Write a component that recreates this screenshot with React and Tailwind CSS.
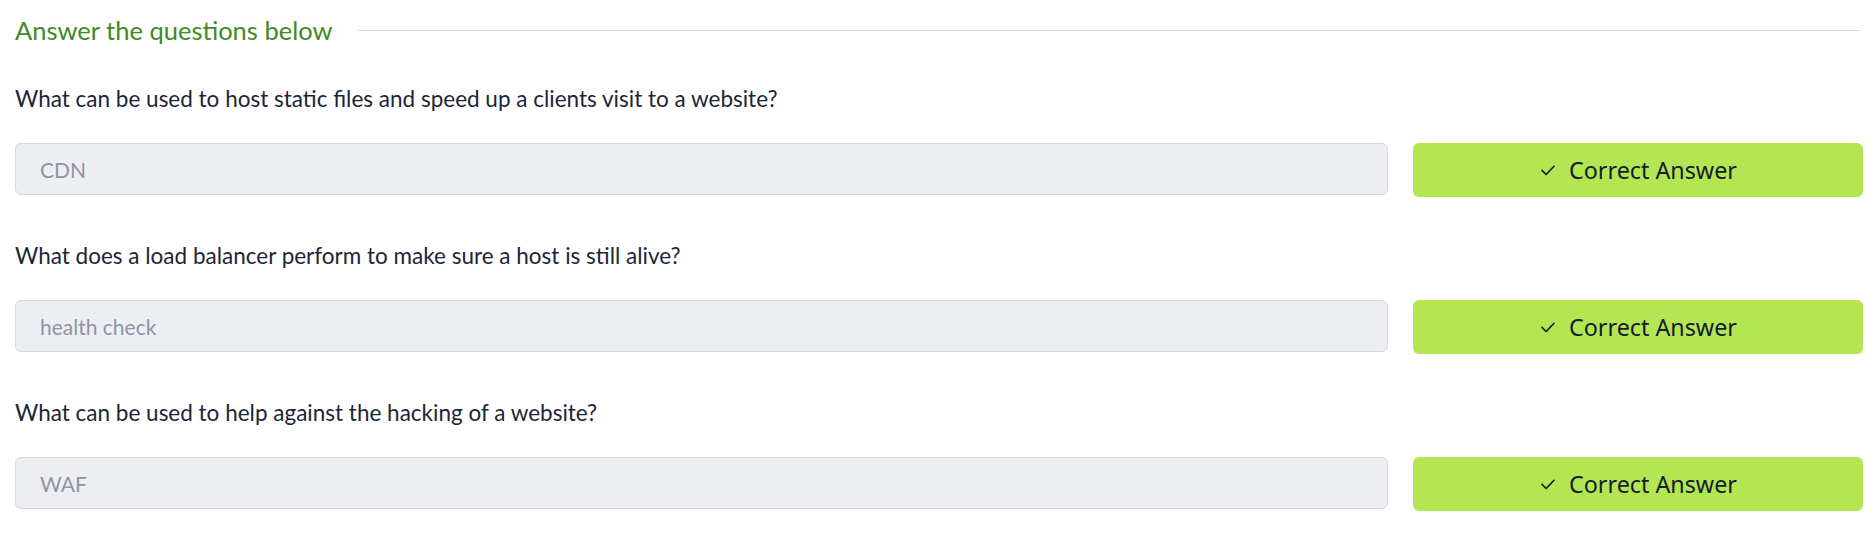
import { useState } from "react";

const questions = [
  { q: "What can be used to host static files and speed up a clients visit to a website?", a: "CDN" },
  { q: "What does a load balancer perform to make sure a host is still alive?", a: "health check" },
  { q: "What can be used to help against the hacking of a website?", a: "WAF" },
];

function CheckIcon() {
  return (
    <svg width="18" height="18" viewBox="0 0 24 24" fill="none" stroke="currentColor" strokeWidth="2.2" strokeLinecap="round" strokeLinejoin="round">
      <polyline points="4 12.5 9.5 18 20 7" />
    </svg>
  );
}

function QuestionRow({ q, a }) {
  const [value, setValue] = useState(a);
  return (
    <div className="mb-[43px]">
      <p className="h-[32px] leading-[32px] text-[22.5px] text-[#1c2538] mb-[28px]">{q}</p>
      <div className="flex items-start gap-[25px]">
        <input
          className="flex-1 h-[52px] px-6 rounded-md border border-[#d4d7df] bg-[#edeef2] text-[21px] text-[#8e93a5] outline-none"
          value={value}
          readOnly
          onChange={(e) => setValue(e.target.value)}
        />
        <button className="w-[450px] h-[54px] rounded-md bg-[#b3e652] text-[#151c2b] flex items-center justify-center gap-[12px] text-[23.3px] font-['Noto_Sans',sans-serif]">
          <CheckIcon />
          Correct Answer
        </button>
      </div>
    </div>
  );
}

export default function App() {
  return (
    <div className="min-h-screen bg-white pl-[15px] pr-[13px] font-['Lato','Open_Sans',sans-serif]">
      <div className="h-[60px] flex items-center">
        <h3 className="text-[25.5px] text-[#3f8a25]">Answer the questions below</h3>
        <div className="flex-1 h-px bg-[#d4d5de] ml-[26px] mr-[3px]" />
      </div>
      <div className="mt-[23px]">
        {questions.map((item) => (
          <QuestionRow key={item.a} q={item.q} a={item.a} />
        ))}
      </div>
    </div>
  );
}
